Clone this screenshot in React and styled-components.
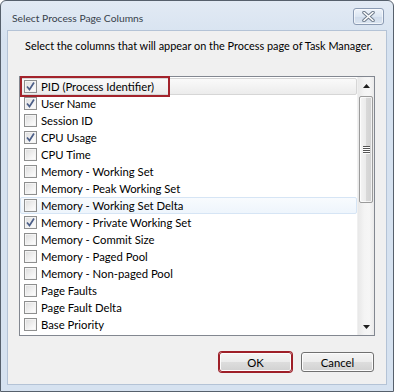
import React from "react";
import styled, { createGlobalStyle } from "styled-components";

const FONT = `Lato, "Noto Sans", sans-serif`;

const GlobalStyle = createGlobalStyle`
  html, body { margin: 0; padding: 0; background: #ffffff; }
  body { font-family: ${FONT}; }
  * { box-sizing: border-box; }
`;

const Window = styled.div`
  width: 394px;
  height: 392px;
  border: 1px solid #56606c;
  border-radius: 6px 6px 0 0;
  background: linear-gradient(#e2eaf4, #d6e2f0 40px, #d6e2f0);
  display: flex;
  flex-direction: column;
  overflow: hidden;
`;

const TitleBar = styled.div`
  height: 29px;
  display: flex;
  align-items: center;
  justify-content: space-between;
  padding: 0 9px 0 11px;
`;

const Title = styled.div`
  font-size: 10.3px;
  color: #38414b;
  padding-top: 5px;
`;

const CloseButton = styled.div`
  width: 31px;
  height: 17px;
  margin-top: 2px;
  border: 1px solid #8b9bb3;
  border-radius: 3px;
  background: linear-gradient(#eef3fa, #dce6f2 50%, #cfdbeb 51%, #dbe5f1);
  display: flex;
  align-items: center;
  justify-content: center;
  box-shadow: inset 0 0 0 1px rgba(255, 255, 255, 0.6);
`;

const Client = styled.div`
  flex: 1;
  margin: 0 6px 6px 6px;
  background: #f0f0f0;
  border: 1px solid #b4c3d6;
  display: flex;
  flex-direction: column;
  padding: 7px 10px 0 11px;
`;

const Instruction = styled.div`
  font-size: 10.9px;
  line-height: 16px;
  color: #000;
  padding-left: 6px;
  white-space: nowrap;
`;

const ListBox = styled.div`
  margin-top: 22px;
  height: 260px;
  width: 356px;
  border: 1px solid #828790;
  background: #ffffff;
  display: flex;
`;

const Rows = styled.div`
  flex: 1;
  padding-top: 1px;
  display: flex;
  flex-direction: column;
`;

const Row = styled.div`
  position: relative;
  height: 17px;
  display: flex;
  align-items: center;
  gap: 4px;
  padding-left: 3px;
  font-size: 11.3px;
  color: #000;
  border: 1px solid transparent;
  border-radius: 2px;
  ${(p) =>
    p.$state === "selected" &&
    `
    background: linear-gradient(#fafafa, #ececec);
    border-color: #d6d6d6;
  `}
  ${(p) =>
    p.$state === "hover" &&
    `
    background: linear-gradient(#f8fbfe, #eef5fc);
    border-color: #d6e5f5;
  `}
`;

const Label = styled.span`
  line-height: 15px;
  white-space: nowrap;
`;

const Box = styled.span`
  width: 13px;
  height: 13px;
  border: 1px solid #8e8f8f;
  background: linear-gradient(135deg, #dcdcdc, #f6f6f6 70%, #ffffff);
  box-shadow: inset 0 0 0 1px #f4f4f4;
  display: flex;
  align-items: center;
  justify-content: center;
  flex: none;
`;

const Annotation = styled.div`
  position: absolute;
  left: -1px;
  top: -3px;
  width: 150px;
  height: 21px;
  border: 2px solid #a3232b;
  pointer-events: none;
`;

const ScrollBar = styled.div`
  width: 17px;
  display: flex;
  flex-direction: column;
  background: linear-gradient(90deg, #e8e8e8, #f4f4f4 40%, #f6f6f6 70%, #eaeaea);
  border-left: 1px solid #f0f0f0;
`;

const Arrow = styled.div`
  height: 17px;
  display: flex;
  align-items: center;
  justify-content: center;
  flex: none;
`;

const Track = styled.div`
  flex: 1;
  padding: 2px 1px 0 1px;
`;

const Thumb = styled.div`
  height: 107px;
  border: 1px solid #9b9b9b;
  border-radius: 2px;
  background: linear-gradient(90deg, #f4f4f4, #ebebeb 50%, #d9d9d9 51%, #d2d2d2);
  box-shadow: inset 0 0 0 1px rgba(255, 255, 255, 0.7);
  display: flex;
  align-items: center;
  justify-content: center;
`;

const Grip = styled.div`
  width: 7px;
  display: flex;
  flex-direction: column;
  gap: 1px;
  span {
    height: 1px;
    background: #555;
    box-shadow: 0 1px 0 #fff;
  }
`;

const ButtonRow = styled.div`
  display: flex;
  justify-content: flex-end;
  gap: 9px;
  margin-top: 16px;
  width: 356px;
  padding-right: 1px;
`;

const Button = styled.div`
  width: 73px;
  height: 20px;
  border: 1px solid ${(p) => (p.$marked ? "#9e1f28" : "#707070")};
  border-radius: 3px;
  background: linear-gradient(#f4f4f4, #ececec 48%, #dddddd 52%, #d1d1d1);
  box-shadow: inset 0 0 0 1px #fcfcfc${(p) => (p.$marked ? ", 0 0 0 1px #9e1f28" : "")};
  display: flex;
  align-items: center;
  justify-content: center;
  font-size: 11.3px;
  color: #000;
`;

const items = [
  ["PID (Process Identifier)", true, "selected"],
  ["User Name", true],
  ["Session ID", false],
  ["CPU Usage", true],
  ["CPU Time", false],
  ["Memory - Working Set", false],
  ["Memory - Peak Working Set", false],
  ["Memory - Working Set Delta", false, "hover"],
  ["Memory - Private Working Set", true],
  ["Memory - Commit Size", false],
  ["Memory - Paged Pool", false],
  ["Memory - Non-paged Pool", false],
  ["Page Faults", false],
  ["Page Fault Delta", false],
  ["Base Priority", false],
];

function Check() {
  return (
    <svg width="11" height="11" viewBox="0 0 11 11">
      <path d="M2 5.5 L4.5 8.5 L9 1.5" fill="none" stroke="#4c5f88" strokeWidth="1.7" />
    </svg>
  );
}

function CloseGlyph() {
  return (
    <svg width="13" height="11" viewBox="0 0 13 11">
      <path d="M2 1.5 L11 9.5 M11 1.5 L2 9.5" stroke="#6f7c8c" strokeWidth="3.6" strokeLinecap="round" />
      <path d="M2 1.5 L11 9.5 M11 1.5 L2 9.5" stroke="#ffffff" strokeWidth="1.6" strokeLinecap="round" />
    </svg>
  );
}

function Tri({ down }) {
  return (
    <svg width="7" height="4" viewBox="0 0 7 4">
      <path d={down ? "M0 0 L7 0 L3.5 4 Z" : "M0 4 L7 4 L3.5 0 Z"} fill="#202020" />
    </svg>
  );
}

export default function App() {
  return (
    <>
      <GlobalStyle />
      <Window>
        <TitleBar>
          <Title>Select Process Page Columns</Title>
          <CloseButton>
            <CloseGlyph />
          </CloseButton>
        </TitleBar>
        <Client>
          <Instruction>
            Select the columns that will appear on the Process page of Task Manager.
          </Instruction>
          <ListBox>
            <Rows>
              {items.map(([label, checked, state]) => (
                <Row key={label} $state={state}>
                  <Box>{checked && <Check />}</Box>
                  <Label>{label}</Label>
                  {state === "selected" && <Annotation />}
                </Row>
              ))}
            </Rows>
            <ScrollBar>
              <Arrow>
                <Tri />
              </Arrow>
              <Track>
                <Thumb>
                  <Grip>
                    <span />
                    <span />
                    <span />
                    <span />
                  </Grip>
                </Thumb>
              </Track>
              <Arrow>
                <Tri down />
              </Arrow>
            </ScrollBar>
          </ListBox>
          <ButtonRow>
            <Button $marked>OK</Button>
            <Button>Cancel</Button>
          </ButtonRow>
        </Client>
      </Window>
    </>
  );
}
